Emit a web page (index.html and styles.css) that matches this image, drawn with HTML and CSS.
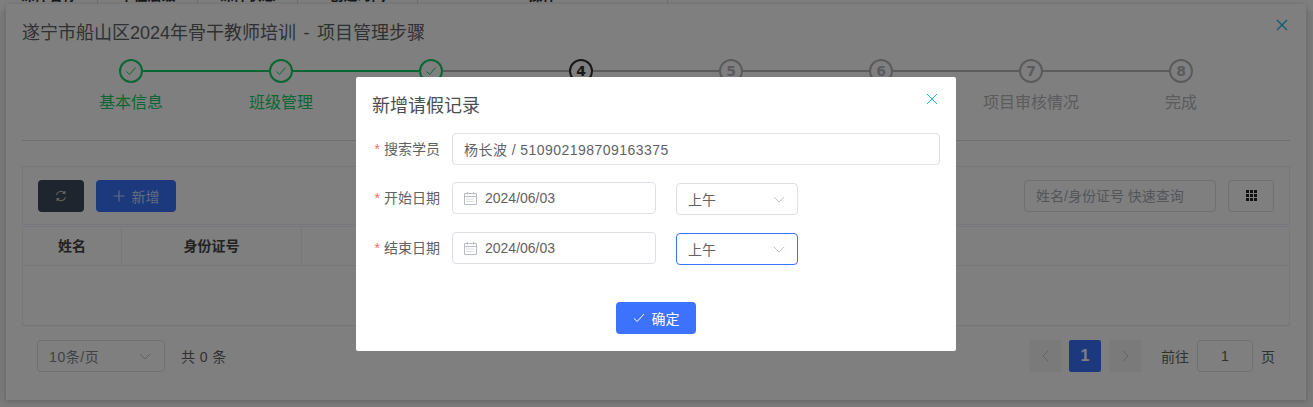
FILE: index.html
```html
<!DOCTYPE html>
<html lang="zh-CN">
<head>
<meta charset="utf-8">
<title>项目管理步骤</title>
<link rel="stylesheet" href="styles.css">
</head>
<body>
<div class="back-head">
  <div class="bh-cell bh-1"><span>课件名称</span></div>
  <div class="bh-cell bh-2"><span>单位层级</span></div>
  <div class="bh-cell bh-3"><span>课件状态</span></div>
  <div class="bh-cell bh-4"><span>创建时间</span></div>
  <div class="bh-cell bh-5"><span>操作</span></div>
</div>

<section class="panel">
  <h1 class="panel-title">遂宁市船山区2024年骨干教师培训 - 项目管理步骤</h1>
  <svg class="panel-close" width="12" height="12" viewBox="0 0 12 12"><path d="M1 1l10 10M11 1L1 11"/></svg>

  <div class="steps">
    <div class="step done first">
      <div class="step-head"><i class="line"></i><span class="circle"><svg width="12" height="12" viewBox="0 0 12 12"><path d="M1.5 6.5l3 3 6-7"/></svg></span><i class="line"></i></div>
      <div class="step-label">基本信息</div>
    </div>
    <div class="step done">
      <div class="step-head"><i class="line"></i><span class="circle"><svg width="12" height="12" viewBox="0 0 12 12"><path d="M1.5 6.5l3 3 6-7"/></svg></span><i class="line"></i></div>
      <div class="step-label">班级管理</div>
    </div>
    <div class="step done half">
      <div class="step-head"><i class="line"></i><span class="circle"><svg width="12" height="12" viewBox="0 0 12 12"><path d="M1.5 6.5l3 3 6-7"/></svg></span><i class="line"></i></div>
      <div class="step-label">课程安排</div>
    </div>
    <div class="step current">
      <div class="step-head"><i class="line"></i><span class="circle">4</span><i class="line"></i></div>
      <div class="step-label">考勤管理</div>
    </div>
    <div class="step">
      <div class="step-head"><i class="line"></i><span class="circle">5</span><i class="line"></i></div>
      <div class="step-label">学员考核</div>
    </div>
    <div class="step">
      <div class="step-head"><i class="line"></i><span class="circle">6</span><i class="line"></i></div>
      <div class="step-label">培训总结</div>
    </div>
    <div class="step">
      <div class="step-head"><i class="line"></i><span class="circle">7</span><i class="line"></i></div>
      <div class="step-label">项目审核情况</div>
    </div>
    <div class="step last">
      <div class="step-head"><i class="line"></i><span class="circle">8</span><i class="line"></i></div>
      <div class="step-label">完成</div>
    </div>
  </div>

  <hr class="divider">

  <div class="toolbar">
    <button class="btn btn-dark" type="button">
      <svg class="ico-refresh" width="12" height="12" viewBox="0 0 12 12"><path d="M1.4 5A4.7 4.7 0 0 1 9.6 3M10.6 7A4.7 4.7 0 0 1 2.4 9M9.9 1v2.4H7.5M2.1 11V8.6h2.4"/></svg>
    </button>
    <button class="btn btn-blue" type="button">
      <svg class="ico-plus" width="12" height="12" viewBox="0 0 12 12"><path d="M6 .5v11M.5 6h11"/></svg>
      新增
    </button>
    <div class="spacer"></div>
    <div class="search">姓名/身份证号 快速查询</div>
    <button class="btn btn-plain" type="button">
      <svg class="ico-grid" width="11" height="11" viewBox="0 0 11 11"><path d="M0 0h3v3H0zM4 0h3v3H4zM8 0h3v3H8zM0 4h3v3H0zM4 4h3v3H4zM8 4h3v3H8zM0 8h3v3H0zM4 8h3v3H4zM8 8h3v3H8z"/></svg>
    </button>
  </div>

  <div class="table">
    <div class="th">姓名</div>
    <div class="th">身份证号</div>
    <div class="th th-rest"></div>
  </div>

  <div class="pager">
    <div class="size-select"><span class="size-text">10条/页</span>
      <svg class="chev" width="12" height="7" viewBox="0 0 12 7"><path d="M1 1l5 5 5-5"/></svg>
    </div>
    <span class="total">共 0 条</span>
    <div class="spacer"></div>
    <span class="pg-btn"><svg width="7" height="12" viewBox="0 0 7 12"><path d="M6 1L1 6l5 5"/></svg></span>
    <span class="pg-btn active">1</span>
    <span class="pg-btn"><svg width="7" height="12" viewBox="0 0 7 12"><path d="M1 1l5 5-5 5"/></svg></span>
    <span class="goto">前往</span>
    <span class="goto-input">1</span>
    <span class="goto-end">页</span>
  </div>
</section>

<div class="mask"></div>

<section class="dialog">
  <h2 class="dialog-title">新增请假记录</h2>
  <svg class="dialog-close" width="12" height="12" viewBox="0 0 12 12"><path d="M1 1l10 10M11 1L1 11"/></svg>

  <div class="form-row">
    <label class="form-label"><em>*</em>搜索学员</label>
    <div class="field field-full">杨长波 / 510902198709163375</div>
  </div>
  <div class="form-row">
    <label class="form-label"><em>*</em>开始日期</label>
    <div class="field field-date">
      <svg class="ico-cal" width="13" height="13" viewBox="0 0 13 13"><path d="M.5 1.5h12v11H.5zM.5 4.5h12M3.5 0v2.5M9.5 0v2.5"/><path class="dots" d="M2.5 7h8M2.5 9.5h8"/></svg>
      2024/06/03
    </div>
    <div class="field field-select">上午
      <svg class="chev" width="12" height="7" viewBox="0 0 12 7"><path d="M1 1l5 5 5-5"/></svg>
    </div>
  </div>
  <div class="form-row">
    <label class="form-label"><em>*</em>结束日期</label>
    <div class="field field-date">
      <svg class="ico-cal" width="13" height="13" viewBox="0 0 13 13"><path d="M.5 1.5h12v11H.5zM.5 4.5h12M3.5 0v2.5M9.5 0v2.5"/><path class="dots" d="M2.5 7h8M2.5 9.5h8"/></svg>
      2024/06/03
    </div>
    <div class="field field-select focused">上午
      <svg class="chev" width="12" height="7" viewBox="0 0 12 7"><path d="M1 1l5 5 5-5"/></svg>
    </div>
  </div>

  <div class="dialog-foot">
    <button class="btn btn-confirm" type="button">
      <svg class="ico-check" width="12" height="10" viewBox="0 0 12 10"><path d="M1 5.5l3.2 3L11 1"/></svg>
      确定
    </button>
  </div>
</section>
</body>
</html>
```
FILE: styles.css
```css
* { box-sizing: border-box; }
html, body { margin: 0; height: 407px; overflow: hidden; }
body {
  background: #f4f4f4;
  font-family: "Liberation Sans", "Noto Sans CJK SC", sans-serif;
  font-size: 14px;
  color: #606266;
}
svg { fill: none; stroke: currentColor; display: block; flex: none; }

/* page behind the panels */
.back-head { display: flex; height: 11px; background: #fff; overflow: hidden; }
.bh-cell {
  border-right: 1px solid #e4e4e4; text-align: center;
  font-weight: 700; color: #303133; line-height: 20px; margin-top: -15px; height: 26px;
}
.bh-1 { width: 98px; }
.bh-2 { width: 100px; }
.bh-3 { width: 100px; }
.bh-4 { width: 120px; }
.bh-5 { width: 250px; }

/* outer dialog */
.panel {
  position: absolute; left: 6px; top: 4px; width: 1300px; height: 396px;
  background: #fff; padding: 17px 16px 0;
  box-shadow: 0 1px 6px rgba(0, 0, 0, .2);
}
.panel-title { margin: 0; font-size: 18px; font-weight: 400; line-height: 24px; color: #606266; word-spacing: 2.5px; }
.panel-close {
  position: absolute; right: 18px; top: 15px; color: #19b4e8; stroke-width: 1.2;
}
.steps { display: grid; grid-template-columns: repeat(8, 150px); margin: 14px 0 0 34px; }
.step { text-align: center; }
.step-head { display: flex; align-items: center; height: 24px; }
.line { flex: 1; height: 2px; background: #b6b6bc; }
.first .line:first-child, .last .line:last-child { visibility: hidden; }
.done .line { background: #13ce66; }
.half .line:last-child { background: #b6b6bc; }
.circle {
  width: 24px; height: 24px; border-radius: 50%; border: 2px solid #b6b6bc;
  display: flex; align-items: center; justify-content: center;
  font-size: 14px; font-weight: 700; color: #b6b6bc; background: #fff; flex: none;
  font-family: "DejaVu Sans", sans-serif;
}
.done .circle { border-color: #13ce66; color: #13ce66; }
.done .circle svg { stroke-width: 1; }
.current .circle { border-color: #303133; color: #303133; }
.step-label { margin-top: 8px; font-size: 16px; line-height: 24px; color: #b6b6bc; }
.done .step-label { color: #13ce66; }
.current .step-label { color: #303133; }

.divider { border: 0; border-top: 1px solid #dcdfe6; margin: 25px 0 0; }

.toolbar {
  display: flex; align-items: center; gap: 12px;
  margin-top: 25px; height: 59px; padding: 0 15px;
  border: 1px solid #ebeef5;
}
.spacer { flex: 1; }
.btn {
  height: 32px; border-radius: 4px; border: 1px solid transparent; padding: 0;
  display: flex; align-items: center; justify-content: center; gap: 7px;
  font: inherit; font-size: 14px; color: #fff;
}
.btn-dark { width: 46px; background: #3f4a5d; color: #c8c8c8; }
.ico-refresh { stroke-width: 1.1; }
.btn-blue { width: 80px; background: #3b73fb; color: #c5d5fa; }
.ico-plus { stroke-width: 1.2; }
.btn-plain { width: 46px; background: #fff; border-color: #dcdfe6; color: #303133; }
.ico-grid { fill: #222; stroke: none; }
.search {
  width: 192px; height: 32px; border: 1px solid #dcdfe6; border-radius: 4px;
  padding-left: 11px; line-height: 30px; color: #a8abb2; font-size: 14px;
}

.table {
  display: grid; grid-template-columns: 99px 180px 1fr;
  height: 100px; margin-top: 1px;
  border: 1px solid #ebeef5; grid-template-rows: 39px;
}
.th {
  border-right: 1px solid #ebeef5; border-bottom: 1px solid #ebeef5;
  text-align: center; line-height: 38px; font-weight: 700; color: #444;
}
.th-rest { border-right: 0; }

.pager { display: flex; align-items: center; height: 32px; margin-top: 14px; padding-left: 15px; }
.size-select {
  display: flex; align-items: center; justify-content: space-between;
  width: 128px; height: 32px; border: 1px solid #dcdfe6; border-radius: 4px;
  padding: 0 13px 0 11px; color: #7f8288;
}
.size-text { letter-spacing: .6px; }
.chev { color: #c0c4cc; stroke-width: 1; }
.total { margin-left: 16px; color: #606266; word-spacing: .8px; }
.pg-btn {
  width: 32px; height: 32px; margin-right: 8px; border-radius: 2px; background: #f4f4f5;
  display: flex; align-items: center; justify-content: center;
  color: #c0c4cc; font-weight: 700;
}
.pg-btn.active { background: #3b73fb; color: #fff; font-size: 16px; }
.goto { margin-left: 12px; color: #606266; }
.goto-input {
  width: 56px; height: 32px; margin-left: 8px; border: 1px solid #dcdfe6; border-radius: 4px;
  text-align: center; line-height: 30px; color: #606266;
}
.goto-end { margin: 0 15px 0 8px; }

.mask { position: fixed; inset: 0; background: rgba(0, 0, 0, .5); }

/* inner dialog */
.dialog {
  position: absolute; left: 356px; top: 77px; width: 600px; height: 274px;
  background: #fff; border-radius: 2px; padding: 17px 16px 0;
}
.dialog-title { margin: 0 0 15px; font-size: 18px; font-weight: 400; line-height: 24px; color: #4a4d52; }
.dialog-close { position: absolute; right: 18px; top: 16px; color: #19b4e8; stroke-width: 1; }
.form-row { display: flex; align-items: flex-start; margin-bottom: 17px; }
.form-label { width: 68px; margin-right: 12px; text-align: right; line-height: 32px; color: #606266; white-space: nowrap; }
.form-label em { font-style: normal; color: #f56c6c; margin-right: 4px; }
.field {
  height: 32px; border: 1px solid #dcdfe6; border-radius: 4px;
  display: flex; align-items: center; color: #606266; background: #fff;
}
.field-full { width: 488px; padding-left: 11px; letter-spacing: .45px; }
.field-date { width: 204px; padding-left: 11px; gap: 8px; }
.field-date svg { stroke: #b8bcc4; stroke-width: 1; }
.field-select {
  width: 122px; margin: 1px 0 0 20px; padding: 0 12px 0 11px;
  justify-content: space-between;
}
.focused { border-color: #3b73fb; }
.ico-cal .dots { stroke-width: 1; stroke-dasharray: 1 1; }
.dialog-foot { display: flex; justify-content: center; margin-top: 37px; }
.btn-confirm { width: 80px; background: #3d72ff; color: #fff; border-radius: 4px; }
.ico-check { stroke-width: 1; }
```
